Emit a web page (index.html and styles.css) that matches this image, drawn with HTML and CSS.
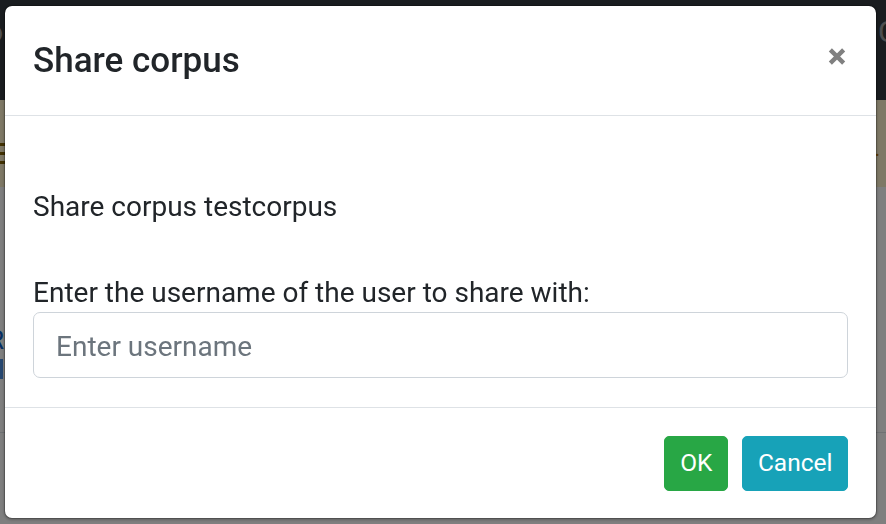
FILE: index.html
```html
<!DOCTYPE html>
<html lang="en">
<head>
<meta charset="utf-8">
<title>Share corpus</title>
<link rel="stylesheet" href="styles.css">
</head>
<body>
<div class="page">
  <nav class="navbar">
    <span class="brand">o</span>
    <span class="nav-link">Corpora</span>
  </nav>
  <div class="alert">
    <span class="alert-icon"><i></i><i></i><i></i></span>
    <span class="alert-dot">.</span>
  </div>
  <main class="content">
    <div class="link-row"><span class="link">R</span></div>
    <div class="link-row small"><span class="link-bar"></span></div>
    <div class="row-line"></div>
  </main>
</div>

<div class="backdrop"></div>

<div class="modal">
  <div class="modal-dialog">
    <div class="modal-header">
      <h5 class="modal-title">Share corpus</h5>
      <button class="close" type="button" aria-label="Close">
        <svg viewBox="0 0 20 20" width="20" height="19" aria-hidden="true">
          <path d="M3 3 L17 17 M17 3 L3 17" stroke="#808080" stroke-width="4.6" stroke-linecap="butt" fill="none"/>
        </svg>
      </button>
    </div>
    <div class="modal-body">
      <p class="intro">Share corpus testcorpus</p>
      <label class="field-label" for="username">Enter the username of the user to share with:</label>
      <input class="form-control" id="username" type="text" placeholder="Enter username">
    </div>
    <div class="modal-footer">
      <button class="btn btn-ok" type="button">OK</button>
      <button class="btn btn-cancel" type="button">Cancel</button>
    </div>
  </div>
</div>
</body>
</html>
```

FILE: styles.css
```css
* { box-sizing: border-box; }

html, body {
  margin: 0;
  padding: 0;
  width: 886px;
  height: 524px;
  overflow: hidden;
  font-family: Roboto, "Liberation Sans", Arial, sans-serif;
  color: #212529;
  background: #ffffff;
}

/* ---------- page behind the backdrop ---------- */
.page {
  display: flex;
  flex-direction: column;
  height: 524px;
}

.navbar {
  height: 100px;
  background: #343a40;
  display: flex;
  align-items: flex-start;
  padding-top: 14px;
  font-size: 30px;
  color: rgba(255, 255, 255, 0.5);
  white-space: nowrap;
}

.brand {
  margin-left: -14px;
  color: rgba(255, 255, 255, 0.55);
}

.nav-link {
  margin-left: auto;
  width: 8px;
  overflow: hidden;
  flex: none;
}

.alert {
  height: 87px;
  background: #fff3cd;
  display: flex;
  align-items: flex-start;
  padding-top: 43px;
  color: #856404;
}

.alert-icon {
  display: flex;
  flex-direction: column;
  gap: 6px;
  width: 6px;
}

.alert-icon i {
  display: block;
  height: 3px;
  background: #856404;
}

.alert-dot {
  margin-left: auto;
  margin-right: 6px;
  font-size: 20px;
  line-height: 12px;
  color: #c07a00;
}

.content {
  flex: 1;
  padding-top: 138px;
  background: #ffffff;
}

.link-row {
  height: 30px;
  font-size: 26px;
  line-height: 30px;
  color: #0b5cc7;
}

.link {
  margin-left: -12px;
}

.link-bar {
  display: block;
  width: 3px;
  height: 20px;
  margin-top: 4px;
  background: #4d8fe0;
}

.row-line {
  margin-top: 43px;
  height: 1px;
  background: #dee2e6;
}

/* ---------- backdrop ---------- */
.backdrop {
  position: fixed;
  inset: 0;
  background: rgba(0, 0, 0, 0.5);
}

/* ---------- modal ---------- */
.modal {
  position: fixed;
  inset: 0;
  display: flex;
  align-items: flex-start;
}

.modal-dialog {
  margin: 5px 0 0 4px;
  width: 873px;
  background: #ffffff;
  border: 1px solid rgba(0, 0, 0, 0.2);
  border-radius: 8px;
  background-clip: padding-box;
  box-shadow: 0 1px 3px rgba(0, 0, 0, 0.25);
  display: flex;
  flex-direction: column;
}

.modal-header {
  display: flex;
  align-items: flex-start;
  padding: 29px 28px 27px 28px;
  border-bottom: 1px solid #dee2e6;
}

.modal-title {
  margin: 0;
  font-size: 35px;
  font-weight: 500;
  line-height: 52.5px;
  color: #212529;
}

.close {
  margin: 12px 1px 0 auto;
  padding: 0;
  border: 0;
  background: transparent;
  width: 20px;
  height: 19px;
  display: flex;
}

.close svg { display: block; }

.modal-body {
  padding: 28px 28px 29px 28px;
  font-size: 28px;
  line-height: 42px;
}

.intro {
  margin: 42px 0 44px 0;
}

.field-label {
  display: block;
  margin-bottom: -2px;
}

.form-control {
  display: block;
  width: 100%;
  height: 66px;
  padding: 3px 22px 0 22px;
  font-family: inherit;
  font-size: 28px;
  color: #495057;
  background: #ffffff;
  border: 1px solid #ced4da;
  border-radius: 7px;
  outline: none;
}

.form-control::placeholder {
  color: #6c757d;
  opacity: 1;
}

.modal-footer {
  display: flex;
  justify-content: flex-end;
  gap: 14px;
  padding: 28px 28px 27px 28px;
  border-top: 1px solid #dee2e6;
}

.btn {
  height: 55px;
  padding: 1px 15px 0 15px;
  font-family: inherit;
  font-size: 24.5px;
  font-weight: 400;
  color: #ffffff;
  border-radius: 5px;
  border: 1px solid transparent;
  line-height: 1;
}

.btn-ok {
  background: #28a745;
  border-color: #28a745;
}

.btn-cancel {
  padding-left: 14.5px;
  padding-right: 14.5px;
  background: #17a2b8;
  border-color: #17a2b8;
}
```
